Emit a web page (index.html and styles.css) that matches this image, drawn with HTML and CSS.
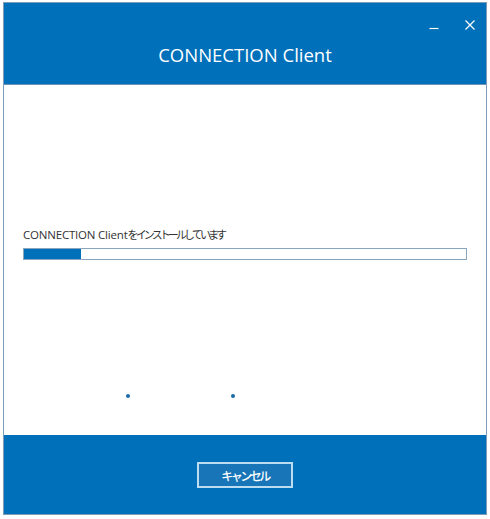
FILE: index.html
```html
<!DOCTYPE html>
<html lang="ja">
<head>
<meta charset="utf-8">
<link rel="stylesheet" href="styles.css">
</head>
<body>
<div class="window">
  <header class="header">
    <div class="controls">
      <svg class="ctl" width="12" height="12" viewBox="0 0 12 12"><path d="M1.5 9.5H10.5" stroke="#fff" stroke-width="1.2"/></svg>
      <svg class="ctl" width="12" height="12" viewBox="0 0 12 12"><path d="M1.5 1.5L10.5 10.5M10.5 1.5L1.5 10.5" stroke="#fff" stroke-width="1.2"/></svg>
    </div>
    <h1 class="title">CONNECTION Client</h1>
  </header>
  <main class="content">
    <p class="label">CONNECTION Client<span class="kana">をインストールしています</span></p>
    <div class="progress"><div class="fill" style="width:13%"></div></div>
    <div class="dots"><span class="dot"></span><span class="dot"></span></div>
  </main>
  <footer class="footer">
    <button class="btn">キャンセル</button>
  </footer>
</div>
</body>
</html>
```

FILE: styles.css
```css
html, body { margin: 0; padding: 0; background: #fff; }
body { padding: 2px 3px 0 3px; font-family: "Open Sans", "Noto Sans CJK JP", sans-serif; }
.window {
  width: 482px;
  height: 511px;
  border: 1px solid #7f9db6;
  display: flex;
  flex-direction: column;
}
.header {
  height: 81px;
  background: #0070ba;
  display: flex;
  flex-direction: column;
}
.controls {
  display: flex;
  justify-content: flex-end;
  gap: 24px;
  padding: 16px 10px 0 0;
  height: 14px;
}
.title {
  margin: 10px 0 0 0;
  text-align: center;
  color: #fff;
  font-weight: 400;
  font-size: 18.5px;
  line-height: 24px;
}
.content {
  flex: 1;
  background: #fff;
  border-top: 1px solid #6f93b3;
  padding: 0 19px 0 19px;
  display: flex;
  flex-direction: column;
}
.label {
  margin: 141px 0 0 0;
  font-size: 11.5px;
  line-height: 16px;
  color: #333;
  letter-spacing: -0.2px;
}
.kana {
  font-family: "Noto Sans CJK JP", sans-serif;
  font-size: 11px;
  letter-spacing: -2.9px;
}
.progress {
  margin-top: 5px;
  height: 10px;
  border: 1px solid #8aa6bf;
  background: #fff;
}
.fill { height: 100%; background: #0070ba; }
.dots {
  margin-top: 134px;
  display: flex;
  gap: 101px;
  padding-left: 103px;
}
.dot { width: 4px; height: 4px; border-radius: 50%; background: #1a6aa8; }
.footer {
  height: 79px;
  background: #0070ba;
  display: flex;
  justify-content: center;
  align-items: flex-start;
}
.btn {
  margin-top: 27px;
  width: 96px;
  height: 26px;
  border: 2px solid #bcdcf2;
  background: #1775b8;
  color: #fff;
  font-family: "Noto Sans CJK JP", sans-serif;
  font-size: 12px;
  font-weight: 500;
  letter-spacing: -2.5px;
  padding: 0;
}
```
